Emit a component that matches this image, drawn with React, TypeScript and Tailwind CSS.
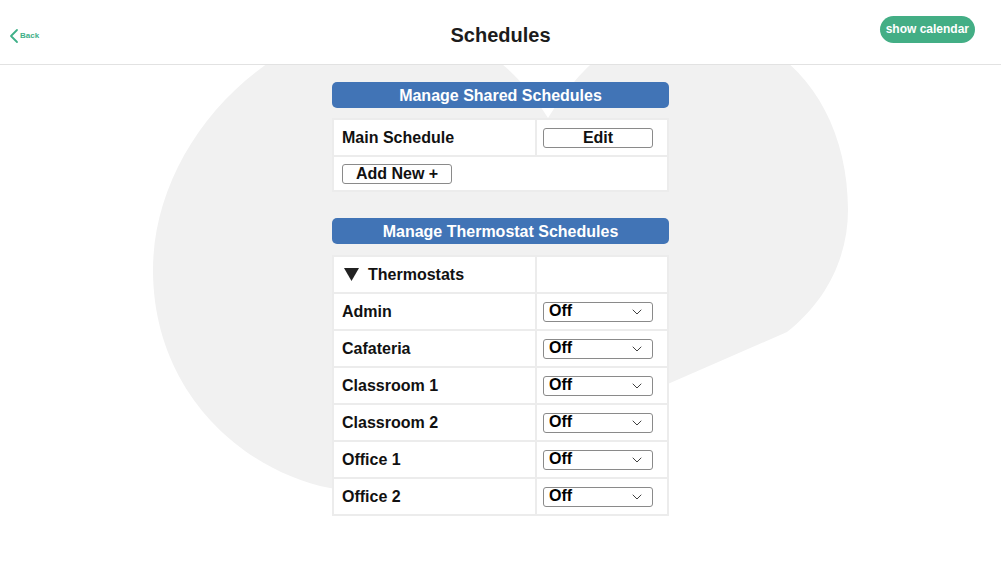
import { ChevronDown, ChevronLeft } from 'lucide-react';

const thermostats = ['Admin', 'Cafateria', 'Classroom 1', 'Classroom 2', 'Office 1', 'Office 2'];

function Backdrop() {
  return (
    <svg
      className="absolute left-0 top-0 pointer-events-none"
      width="1001"
      height="561"
      viewBox="0 0 1001 561"
    >
      <path
        d="M548 118 C500 40 420 8 360 22 C240 50 153 160 153 270 C153 390 240 470 330 488 C380 496 430 490 480 466 L787 332 C828 300 848 255 848 210 C848 110 790 35 700 24 C640 20 590 50 548 118 Z"
        fill="#f1f1f1"
      />
    </svg>
  );
}

function SectionTitle({ children }: { children: React.ReactNode }) {
  return (
    <div className="h-[26px] rounded-[5px] bg-[#4174b6] flex items-center justify-center text-white font-bold text-[16px] pt-[2px]">
      {children}
    </div>
  );
}

function Cell({ children, right }: { children?: React.ReactNode; right?: boolean }) {
  return (
    <div className={`h-[35px] flex items-center ${right ? 'pl-[6px] border-l-2 border-[#ececec]' : 'pl-[8px]'}`}>
      {children}
    </div>
  );
}

function OffSelect() {
  return (
    <div className="w-[110px] h-[20px] border border-[#8a8a8a] rounded-[3px] bg-white flex items-start justify-between pl-[5px] pr-[7px]">
      <span className="text-[16px] font-bold leading-[16px] text-black">Off</span>
      <ChevronDown className="w-[16px] h-[16px] mt-[1px] text-[#333]" strokeWidth={1.4} />
    </div>
  );
}

export default function App() {
  return (
    <div className="relative w-[1001px] h-[561px] bg-white overflow-hidden font-['Liberation_Sans',Arial,sans-serif] text-[#111]">
      <Backdrop />

      {/* header */}
      <header className="relative z-10 h-[65px] bg-white border-b border-[#e2e2e2] grid grid-cols-[1fr_auto_1fr] items-center px-[9px]">
        <div className="flex items-center text-[#3fb088] mt-[7px]">
          <ChevronLeft className="w-[24px] h-[24px] -ml-[7px] -mr-[6px] shrink-0" strokeWidth={1.8} />
          <span className="text-[8px] font-bold">Back</span>
        </div>
        <h1 className="text-[20px] font-bold text-[#1c1c1c] mt-[5px]">Schedules</h1>
        <div className="flex justify-end pr-[17px]">
          <button className="h-[27px] -mt-[6px] px-[6px] rounded-full bg-[#43ae85] text-white text-[12px] font-bold">
            show calendar
          </button>
        </div>
      </header>

      <main className="relative z-10 w-[337px] mx-auto pt-[17px]">
        <SectionTitle>Manage Shared Schedules</SectionTitle>
        <div className="mt-[10px] bg-white border-2 border-[#ececec]">
          <div className="grid grid-cols-[201px_1fr]">
            <Cell>
              <span className="text-[16px] font-bold">Main Schedule</span>
            </Cell>
            <Cell right>
              <button className="w-[110px] h-[20px] border border-[#8a8a8a] rounded-[3px] bg-white text-[16px] font-bold leading-none">
                Edit
              </button>
            </Cell>
          </div>
          <div className="h-[35px] flex items-center pl-[8px] border-t-2 border-[#ececec]">
            <button className="w-[110px] h-[20px] border border-[#8a8a8a] rounded-[3px] bg-white text-[16px] font-bold leading-none">
              Add New +
            </button>
          </div>
        </div>

        <div className="mt-[26px]">
          <SectionTitle>Manage Thermostat Schedules</SectionTitle>
        </div>
        <div className="mt-[11px] bg-white border-2 border-[#ececec]">
          <div className="grid grid-cols-[201px_1fr]">
            <Cell>
              <svg width="15" height="13" viewBox="0 0 15 13" className="mr-[9px] ml-[2px]">
                <polygon points="0,0 15,0 7.5,13" fill="#222" />
              </svg>
              <span className="text-[16px] font-bold">Thermostats</span>
            </Cell>
            <Cell right />
          </div>
          {thermostats.map((name) => (
            <div key={name} className="grid grid-cols-[201px_1fr] border-t-2 border-[#ececec]">
              <Cell>
                <span className="text-[16px] font-bold">{name}</span>
              </Cell>
              <Cell right>
                <OffSelect />
              </Cell>
            </div>
          ))}
        </div>
      </main>
    </div>
  );
}
